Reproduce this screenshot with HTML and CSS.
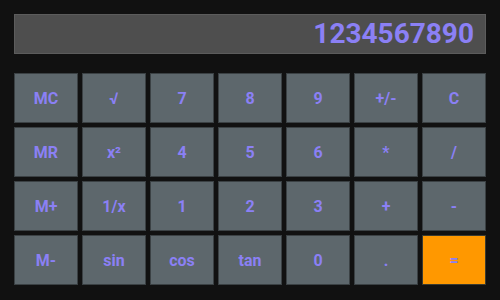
FILE: index.html
```html
<!DOCTYPE html>
<html lang="en">
<head>
  <meta charset="UTF-8" />
  <meta name="viewport" content="width=device-width, initial-scale=1.0"/>
  <title>Calculator</title>
  <link rel="stylesheet" href="styles.css">
</head>
<body>
  <div class="calc">
    <div class="display">1234567890</div>

    <div class="keys">
      <button>MC</button>
      <button>√</button>
      <button>7</button>
      <button>8</button>
      <button>9</button>
      <button>+/-</button>
      <button>C</button>

      <button>MR</button>
      <button>x²</button>
      <button>4</button>
      <button>5</button>
      <button>6</button>
      <button>*</button>
      <button>/</button>

      <button>M+</button>
      <button>1/x</button>
      <button>1</button>
      <button>2</button>
      <button>3</button>
      <button>+</button>
      <button>-</button>

      <button>M-</button>
      <button>sin</button>
      <button>cos</button>
      <button>tan</button>
      <button>0</button>
      <button>.</button>
      <button class="equals">=</button>
    </div>
  </div>
</body>
</html>
```

FILE: styles.css
```css
* {
  margin: 0;
  padding: 0;
  box-sizing: border-box;
}

html, body {
  height: 100%;
  background: #111111;
  font-family: Roboto, 'Liberation Sans', sans-serif;
  overflow: hidden;
}

.calc {
  padding: 14px;
  display: flex;
  flex-direction: column;
  gap: 19px;
}

.display {
  height: 40px;
  background: #4e4e4e;
  border: 1px solid #5c5c5c;
  color: #8b80f5;
  font-size: 28px;
  font-weight: 700;
  text-align: right;
  line-height: 38px;
  padding-right: 11px;
}

.keys {
  display: grid;
  grid-template-columns: repeat(7, 64px);
  grid-auto-rows: 50px;
  gap: 4px;
}

button {
  background: #5d676c;
  border: 1px solid #3b4144;
  color: #8b80f5;
  font-family: inherit;
  font-size: 16px;
  font-weight: 700;
  cursor: pointer;
}

.equals {
  background: #ff9800;
  border-color: #3b3b30;
}
```
